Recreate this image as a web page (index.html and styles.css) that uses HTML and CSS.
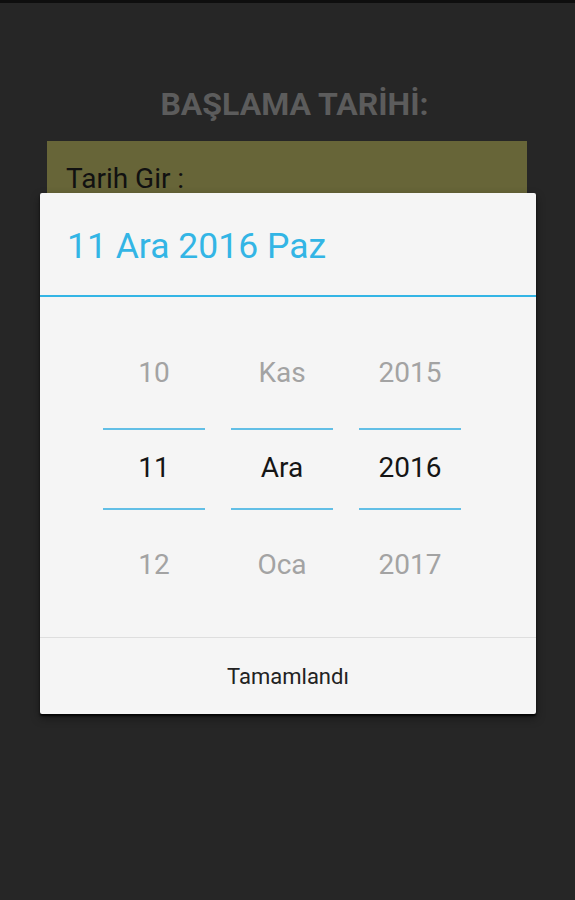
FILE: index.html
```html
<!DOCTYPE html>
<html lang="tr">
<head>
<meta charset="utf-8">
<title>Başlama Tarihi</title>
<link rel="stylesheet" href="styles.css">
</head>
<body>
<div class="screen">
  <div class="statusbar"></div>
  <h1 class="heading">BAŞLAMA TARİHİ:</h1>
  <div class="field">
    <span class="field-label">Tarih Gir :</span>
  </div>

  <div class="dialog">
    <div class="dialog-title">11 Ara 2016 Paz</div>
    <div class="picker">
      <div class="col">
        <div class="cell dim">10</div>
        <div class="cell sel">11</div>
        <div class="cell dim">12</div>
      </div>
      <div class="col">
        <div class="cell dim">Kas</div>
        <div class="cell sel">Ara</div>
        <div class="cell dim">Oca</div>
      </div>
      <div class="col">
        <div class="cell dim">2015</div>
        <div class="cell sel">2016</div>
        <div class="cell dim">2017</div>
      </div>
    </div>
    <div class="dialog-footer">
      <button class="done">Tamamlandı</button>
    </div>
  </div>
</div>
</body>
</html>
```

FILE: styles.css
```css
html, body {
  margin: 0;
  padding: 0;
  background: #262626;
}

.screen {
  position: relative;
  width: 575px;
  height: 900px;
  background: #262626;
  font-family: Roboto, "Liberation Sans", sans-serif;
  overflow: hidden;
}

.statusbar {
  height: 3px;
  background: #0e0e0e;
}

.heading {
  margin: 81px 0 0 0;
  padding-left: 14px;
  height: 40px;
  line-height: 40px;
  font-size: 32px;
  font-weight: 700;
  color: #5c5c5c;
  text-align: center;
}

.field {
  margin: 17px 48px 0 47px;
  height: 130px;
  background: #676538;
  padding: 22px 19px 0 19px;
  box-sizing: border-box;
}

.field-label {
  display: block;
  font-size: 28px;
  line-height: 32px;
  color: #111;
}

.dialog {
  position: absolute;
  left: 40px;
  top: 193px;
  width: 496px;
  height: 521px;
  background: #f5f5f5;
  border-radius: 2px;
  box-shadow: 0 2px 2px rgba(0, 0, 0, 0.85), 0 4px 10px rgba(0, 0, 0, 0.4);
  display: flex;
  flex-direction: column;
}

.dialog-title {
  height: 104px;
  flex: none;
  box-sizing: border-box;
  padding: 3px 0 0 27px;
  display: flex;
  align-items: center;
  font-size: 35.5px;
  color: #33b5e5;
  border-bottom: 2px solid #33b5e5;
}

.picker {
  height: 341px;
  flex: none;
  box-sizing: border-box;
  padding: 36px 0 0 63px;
  display: flex;
  gap: 26px;
  border-bottom: 1px solid #dedede;
}

.col {
  width: 102px;
  display: flex;
  flex-direction: column;
  gap: 15px;
}

.cell {
  height: 80px;
  line-height: 80px;
  text-align: center;
  font-size: 28px;
  box-sizing: border-box;
}

.cell.dim {
  color: #a3a3a3;
}

.cell.sel {
  color: #151515;
  border-top: 2px solid #62bfe6;
  border-bottom: 2px solid #62bfe6;
  line-height: 76px;
  height: 82px;
}

.dialog-footer {
  flex: 1;
  display: flex;
}

.done {
  flex: 1;
  border: 0;
  background: transparent;
  font-family: Roboto, "Liberation Sans", sans-serif;
  font-size: 22px;
  color: #222;
  padding: 0;
  cursor: pointer;
}
```
